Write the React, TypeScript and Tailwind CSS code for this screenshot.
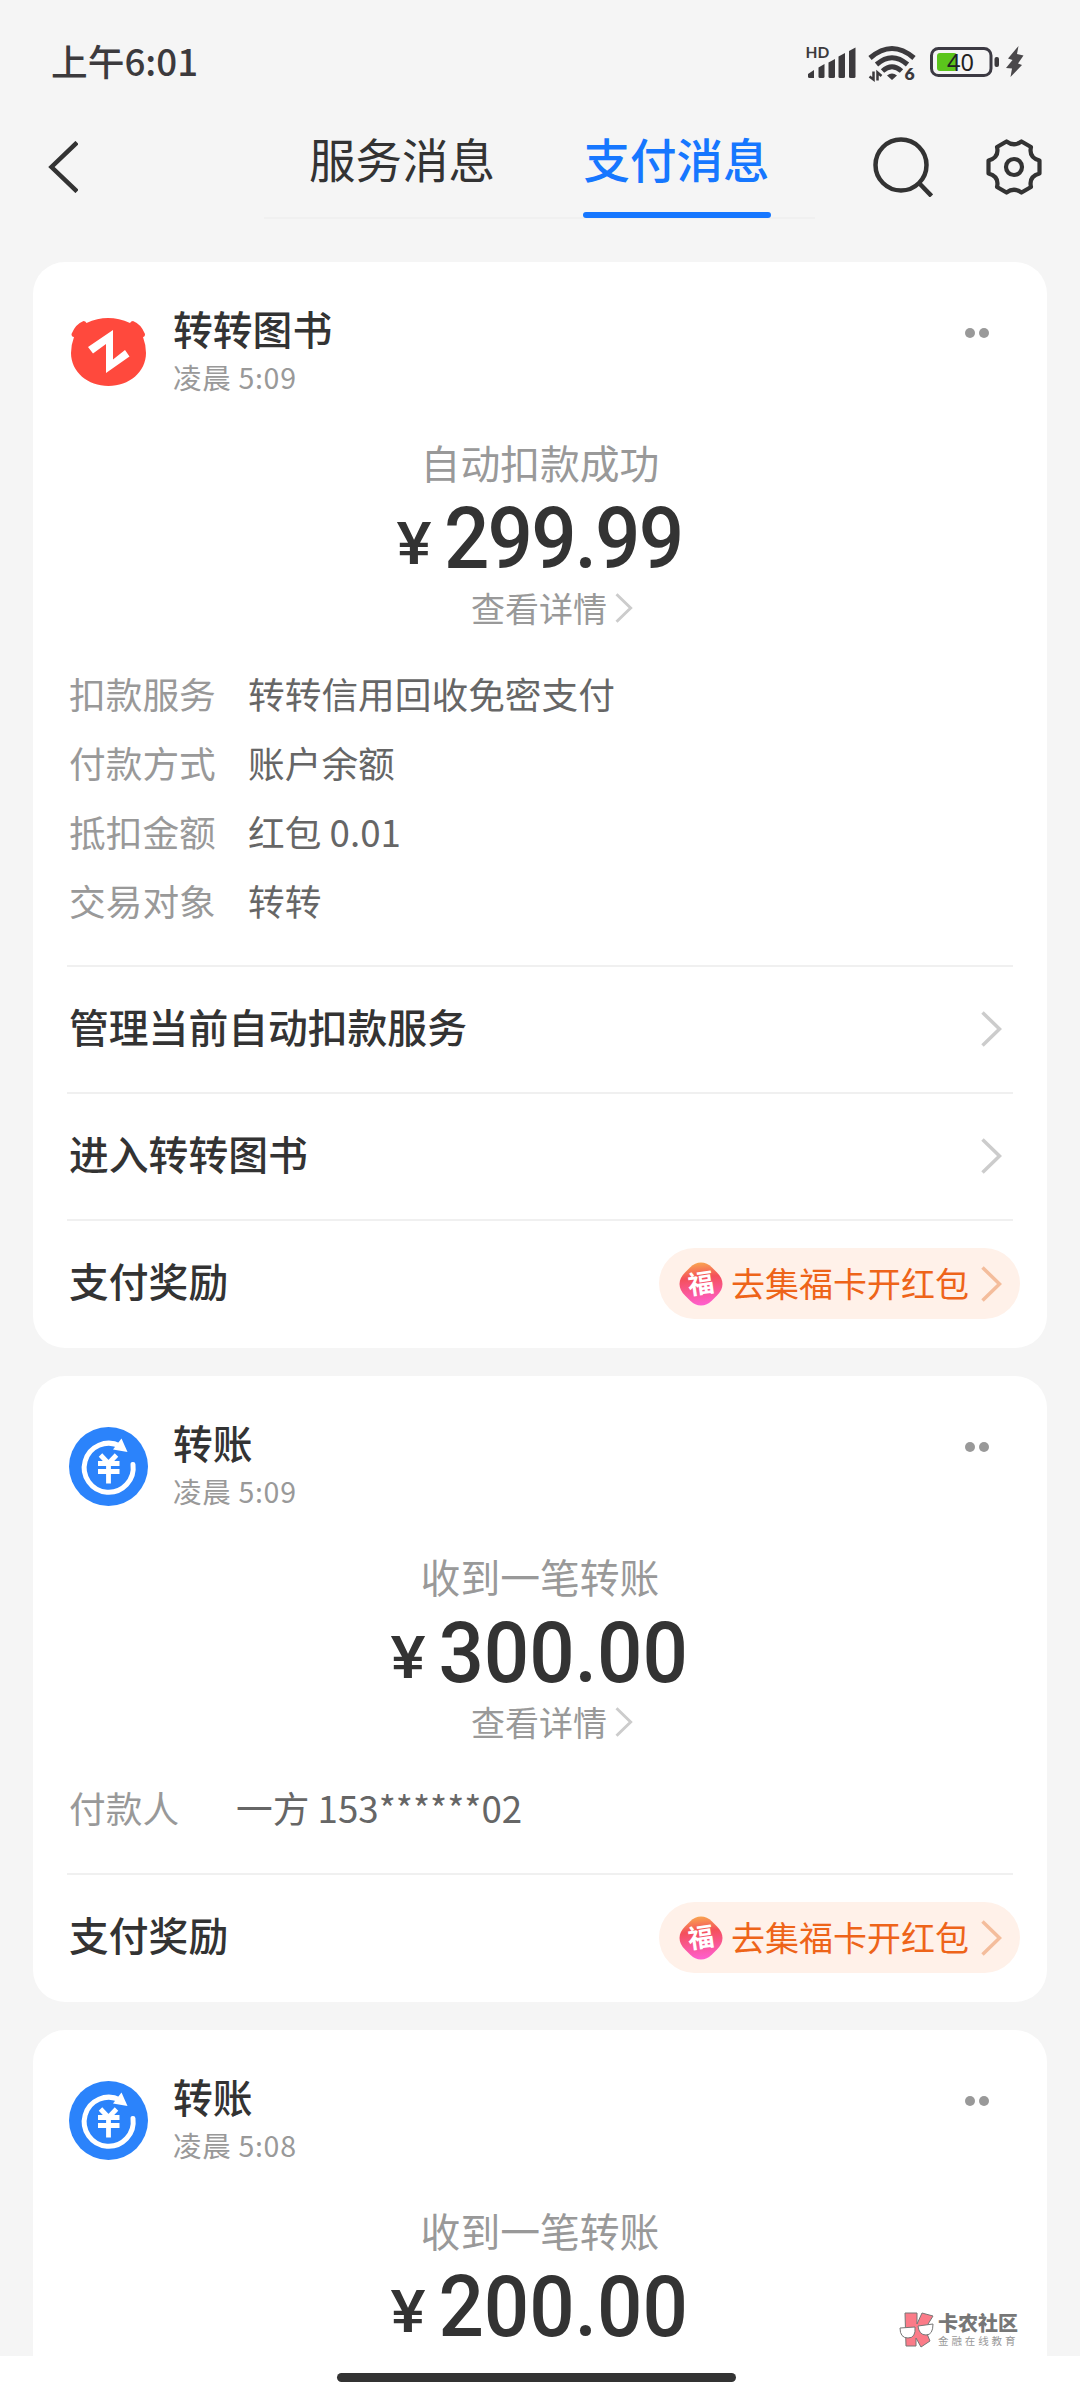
import {ReactNode} from "react";

type Detail = {
  label: string;
  value: string;
};

type Message = {
  id: number;
  kind: "book" | "transfer";
  title: string;
  time: string;
  status: string;
  amount: string;
  details: Detail[];
  links: string[];
};

const messages: Message[] = [
  {
    id: 1,
    kind: "book",
    title: "转转图书",
    time: "凌晨 5:09",
    status: "自动扣款成功",
    amount: "299.99",
    details: [
      {label: "扣款服务", value: "转转信用回收免密支付"},
      {label: "付款方式", value: "账户余额"},
      {label: "抵扣金额", value: "红包 0.01"},
      {label: "交易对象", value: "转转"},
    ],
    links: ["管理当前自动扣款服务", "进入转转图书"],
  },
  {
    id: 2,
    kind: "transfer",
    title: "转账",
    time: "凌晨 5:09",
    status: "收到一笔转账",
    amount: "300.00",
    details: [{label: "付款人", value: "一方 153******02"}],
    links: [],
  },
  {
    id: 3,
    kind: "transfer",
    title: "转账",
    time: "凌晨 5:08",
    status: "收到一笔转账",
    amount: "200.00",
    details: [{label: "付款人", value: "一方 153******02"}],
    links: [],
  },
];

const SignalIcon = () => (
  <svg width="50" height="34" viewBox="0 0 50 34" fill="#3c3a3d" className="overflow-visible">
    <text x="-0.500" y="12" fontSize="15.500" fontWeight="700" fontFamily="Lato, sans-serif">
      HD
    </text>
    <path d="M2 28l6-4V32H3.500a1.500 1.500 0 0 1-1.500-1.500z" />
    <path d="M12.500 21.500l6-3.500v12.500a1.500 1.500 0 0 1-1.500 1.500h-3a1.500 1.500 0 0 1-1.500-1.500z" />
    <path d="M22.500 16.500l6.500-3.500v17.500a1.500 1.500 0 0 1-1.500 1.500h-3.500a1.500 1.500 0 0 1-1.500-1.500z" />
    <path d="M32.500 10.500l6.500-3.500v23.500a1.500 1.500 0 0 1-1.500 1.500h-3.500a1.500 1.500 0 0 1-1.500-1.500z" />
    <path d="M43 5l6.500-3.500v29a1.500 1.500 0 0 1-1.500 1.500h-3.500a1.500 1.500 0 0 1-1.500-1.500z" />
  </svg>
);

const WifiIcon = () => (
  <svg width="48" height="36" viewBox="0 0 48 36" fill="none" stroke="#3c3a3d" className="overflow-visible">
    <path d="M2 12Q24-7 46 12" strokeWidth="5" />
    <path d="M8.500 18.500Q24 5 39.500 18.500" strokeWidth="5" />
    <path d="M14.500 25Q24 16.500 33.500 25" strokeWidth="5" />
    <path d="M19 29.500q5-4 10 0L24 34z" fill="#3c3a3d" stroke="none" />
    <path d="M5.500 25.500v8L1.500 30.500M9.500 34.500v-8l4 3.500" strokeWidth="2.500" />
    <text
      x="36.500"
      y="34"
      fontSize="17.500"
      fontWeight="800"
      fontFamily="Lato, sans-serif"
      fill="#3c3a3d"
      stroke="none">
      6
    </text>
  </svg>
);

const BatteryIcon = () => (
  <svg width="70" height="30" viewBox="0 0 70 30" className="overflow-visible">
    <rect x="1.500" y="1.500" width="59.500" height="27" rx="7" fill="none" stroke="#3c3a43" strokeWidth="3" />
    <rect x="7" y="6" width="20" height="18" rx="3" fill="#5bc51c" />
    <rect x="64.500" y="10" width="4.500" height="10" rx="2" fill="#3c3a3d" />
    <text x="17" y="23.500" fontSize="23.500" fontFamily="'Noto Sans', sans-serif" fill="#222">
      40
    </text>
  </svg>
);

const BoltIcon = () => (
  <svg width="18" height="31" viewBox="0 0 18 31" fill="#4a484b">
    <path d="M12.500 0L2 12.500l4.500 1.500L0 22l6 .5L4.500 31 16 19l-4-1.500L17.500 9.500 11 8z" />
  </svg>
);

const BackIcon = () => (
  <svg width="30" height="52" viewBox="0 0 30 52" fill="none" stroke="#333" strokeWidth="4.500">
    <path d="M29 1.500L3.500 26l25.500 24.500" />
  </svg>
);

const SearchIcon = () => (
  <svg width="60" height="60" viewBox="0 0 60 60" fill="none" stroke="#333" strokeWidth="4.500">
    <circle cx="28" cy="28" r="25.500" />
    <path d="M46 46L58.500 59" />
  </svg>
);

const GearIcon = () => (
  <svg width="56" height="56" viewBox="0 0 56 56" fill="none" stroke="#333" strokeWidth="4.200" strokeLinejoin="round">
    <path d="M20.500 2.500Q28 8 35.500 2.500L45 8Q42.500 18.500 53.500 21.500V34.500Q42.500 37.500 45 48L35.500 53.500Q28 48 20.500 53.500L11 48Q13.500 37.500 2.500 34.500V21.500Q13.500 18.500 11 8Z" />
    <circle cx="28" cy="28" r="8" />
  </svg>
);

const BookLogo = () => (
  <svg width="79" height="79" viewBox="0 0 79 79">
    <path
      d="M2.500 18q4-10 12-13 2 0 3 2Q39-3 61 7q1-2 3-2 8 3 12 13 0 3-2 3 3 8 3 16c0 19-17 33-37.500 33S2 56 2 37q0-8 3-16-2.500 0-2.500-3z"
      transform="translate(0 3)"
      fill="#ff493d"
    />
    <path d="M19 34L44 17V46.500L56 37L60.500 43.500L37 60V31L24 40.500Z" fill="#fff" />
  </svg>
);

const TransferLogo = () => (
  <svg width="79" height="79" viewBox="0 0 79 79" fill="none" stroke="#fff">
    <circle cx="39.500" cy="39.500" r="39.500" fill="#2b83fb" stroke="none" />
    <path d="M51 19A24.500 24.500 0 1 0 64 37.500" strokeWidth="5" strokeLinecap="round" />
    <path d="M52.500 11.500L58.500 25L44 22.500Z" fill="#fff" stroke="none" />
    <path d="M31.500 28L39.500 36.500L47.500 28M29 36.500H50.500M29 44.500H50.500M39.500 36V56.500" strokeWidth="4.800" />
  </svg>
);

const ChevronIcon = ({className}: {className: string}) => (
  <svg viewBox="0 0 21 36" className={className} fill="none" stroke="currentColor" strokeWidth="3.500">
    <path d="M1.500 1.500L18.500 18L1.500 34.500" />
  </svg>
);

const FuIcon = () => (
  <svg width="44" height="44" viewBox="0 0 44 44" className="overflow-visible">
    <defs>
      <linearGradient id="fu" x1="0.400" y1="0" x2="0.500" y2="1">
        <stop offset="0" stopColor="#f9a650" />
        <stop offset="0.350" stopColor="#f4505a" />
        <stop offset="1" stopColor="#ff5fd0" />
      </linearGradient>
    </defs>
    <path
      d="M22 .5q6 0 11 5l5 5q5.500 5.500 5.500 11.500T38 33.500l-5 5q-5 5-11 5t-11-5l-5-5Q.5 28 .5 22T6 10.500l5-5q5-5 11-5z"
      fill="url(#fu)"
    />
    <text
      x="22"
      y="31"
      fontSize="26"
      fontWeight="700"
      textAnchor="middle"
      fontFamily="'Noto Sans CJK SC', sans-serif"
      fill="#fff"
      transform="rotate(-8 22 22)">
      福
    </text>
  </svg>
);

const StatusBar = () => (
  <div className="flex h-[104px] items-start justify-between pl-[51px] pr-[56px]">
    <span className="mt-[35px] text-[36.700px] leading-[50px] font-medium text-[#3c3a3d]">上午6:01</span>
    <div className="mt-[46px] flex items-start">
      <SignalIcon />
      <div className="ml-[12px]">
        <WifiIcon />
      </div>
      <div className="mt-px ml-[14px]">
        <BatteryIcon />
      </div>
      <div className="ml-[6px]">
        <BoltIcon />
      </div>
    </div>
  </div>
);

const Header = () => (
  <header className="flex h-[158px] items-start text-[#333]">
    <div className="mt-[37px] ml-[48px] w-[216px]">
      <BackIcon />
    </div>
    <nav className="flex h-[115px] w-[551px] border-b-2 border-[#f0f0f0] text-[46.500px] leading-[64px]">
      <div className="w-[276px] pt-[22px] text-center">服务消息</div>
      <div className="flex w-[273px] flex-col items-center pt-[22px] font-medium text-[#1677ff]">
        支付消息
        <span className="mt-[22px] h-[6px] w-[188px] shrink-0 rounded-full bg-[#1677ff]" />
      </div>
    </nav>
    <div className="mt-[33px] ml-[58px]">
      <SearchIcon />
    </div>
    <div className="mt-[35px] ml-[53px]">
      <GearIcon />
    </div>
  </header>
);

const Section = ({title, children}: {title: string; children: ReactNode}) => (
  <div className="mx-[34px] flex h-[127px] items-center justify-between border-t-2 border-[#f0f0f0] text-[39.800px] font-medium text-[#333]">
    <span className="ml-[2px] pb-[8px]">{title}</span>
    {children}
  </div>
);

const MessageCard = ({message}: {message: Message}) => {
  const isBook = message.kind === "book";

  return (
    <section className="shrink-0 rounded-[32px] bg-white pt-[51px] pb-[2px]">
      <div className="flex h-[79px] px-[36px]">
        {isBook ? <BookLogo /> : <TransferLogo />}
        <div className="-mt-[9px] ml-[25px] flex-1">
          <div className="text-[39.800px] leading-[48px] font-medium text-[#333]">{message.title}</div>
          <div className="mt-[5px] text-[28.500px] leading-[40px] tracking-[0.700px] text-[#999]">{message.time}</div>
        </div>
        <div className="mt-[15px] mr-[22px] flex gap-[4px]">
          <span className="size-[10px] rounded-full bg-[#999]" />
          <span className="size-[10px] rounded-full bg-[#999]" />
        </div>
      </div>
      <div className="mt-[42px] flex flex-col items-center text-[#999]">
        <div className="text-[39.800px] leading-[56px]">{message.status}</div>
        <div className="mt-[4px] flex h-[90px] items-baseline font-[Roboto] font-medium text-[#333]">
          <span className="relative -top-[4px] mr-[14px] inline-block scale-x-110 text-[60px] leading-[90px]">¥</span>
          <span
            className={
              isBook
                ? "-mx-[9px] inline-block scale-x-93 text-[86px] leading-[90px] tracking-[-2px]"
                : "-mx-[9px] inline-block scale-x-93 text-[86px] leading-[90px]"
            }>
            {message.amount}
          </span>
        </div>
        <div className="-mt-px flex items-center pl-[24px] text-[34px] leading-[50px]">
          查看详情
          <ChevronIcon className="ml-[8px] h-[30px] w-[18px] text-[#ccc]" />
        </div>
      </div>
      <div
        className={
          isBook
            ? "mt-[26px] mb-[30px] px-[36px] text-[36.700px] leading-[69px]"
            : "mt-[26px] mb-[31px] px-[36px] text-[36.700px] leading-[69px]"
        }>
        {message.details.map(({label, value}) => (
          <div key={label} className="flex">
            <span className={isBook ? "w-[179px] text-[#999]" : "w-[167px] text-[#999]"}>{label}</span>
            <span className="text-[#666]">{value}</span>
          </div>
        ))}
      </div>
      {message.links.map((link) => (
        <Section key={link} title={link}>
          <ChevronIcon className="mr-[11px] mb-[2px] h-[36px] w-[21px] text-[#ccc]" />
        </Section>
      ))}
      <Section title="支付奖励">
        <div className="-mr-[7px] flex h-[71px] w-[361px] items-center rounded-full bg-[#fff1e9] pl-[20px] text-[34px] font-normal text-[#ee6419]">
          <FuIcon />
          <span className="ml-[8px] pb-[2px]">去集福卡开红包</span>
          <ChevronIcon className="ml-[12px] h-[36px] w-[21px] text-[#f4bd9c]" />
        </div>
      </Section>
    </section>
  );
};

const Watermark = () => (
  <div className="absolute top-[2311px] left-[899px] flex items-center">
    <svg width="36" height="37" viewBox="0 0 36 37" fill="#fb7b88" stroke="#777" strokeWidth="1">
      <path d="M6 2h12v11l5-11 11 3-8 13 5 12-9 6-5-9v8H7z" />
      <path d="M1 17l15-1q1 11-7 11T1 17zM19 15l15-2q0 11-7 11t-8-9z" fill="#fff" />
    </svg>
    <div className="ml-[3px] text-[#777]">
      <div className="text-[20px] leading-[22px] font-black">卡农社区</div>
      <div className="text-[10.500px] leading-[13px] tracking-[2.900px] text-[#999]">金融在线教育</div>
    </div>
  </div>
);

const App = () => {
  return (
    <div className="relative h-[2400px] w-[1080px] overflow-hidden bg-white font-['Noto_Sans_CJK_SC',sans-serif]">
      <div className="h-[2356px] overflow-hidden bg-[#f5f5f5]">
        <StatusBar />
        <Header />
        <main className="flex flex-col gap-[28px] px-[33px]">
          {messages.map((message) => (
            <MessageCard key={message.id} message={message} />
          ))}
        </main>
      </div>
      <div className="mt-[17px] ml-[337px] h-[9px] w-[399px] rounded-full bg-[#333]" />
      <Watermark />
    </div>
  );
};

export default App;
